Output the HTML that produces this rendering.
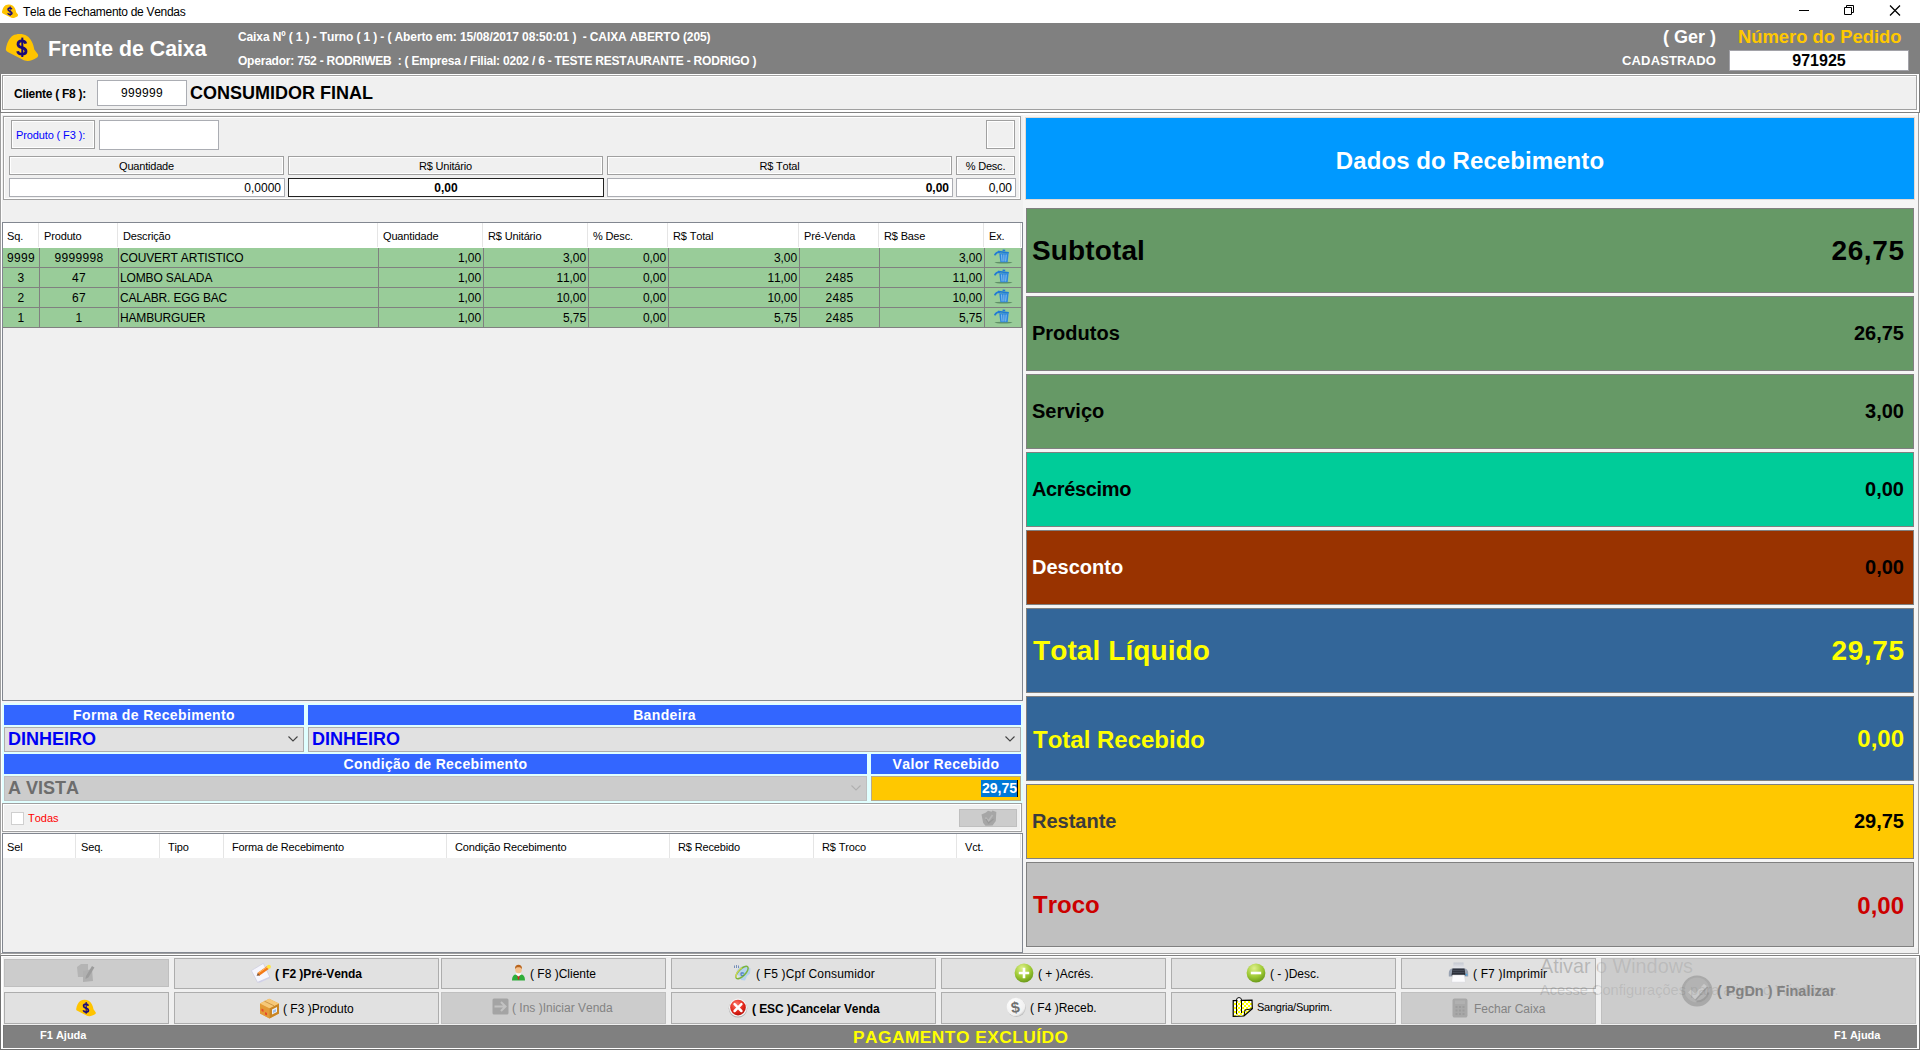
<!DOCTYPE html>
<html lang="pt-BR">
<head>
<meta charset="utf-8">
<title>Tela de Fechamento de Vendas</title>
<style>
*{box-sizing:border-box;margin:0;padding:0}
html,body{width:1920px;height:1050px;overflow:hidden;background:#f0f0f0}
body{position:relative;font-family:"Liberation Sans",sans-serif;font-size:12px;color:#000;font-kerning:none}
.a{position:absolute}
.t{position:absolute;white-space:nowrap;line-height:1}
.b{font-weight:bold}
.w{color:#fff}
/* sunken frame: gray line with white inner line */
.fr{position:absolute;border:1px solid #a0a0a0;box-shadow:inset 1px 1px 0 #fff, inset -1px -1px 0 #fff;background:#f0f0f0}
.lbl{position:absolute;border:1px solid #a0a0a0;box-shadow:inset 1px 1px 0 #fff,inset -1px -1px 0 #fff;background:#f0f0f0;font-size:11px;text-align:center;line-height:19px;letter-spacing:-0.2px}
.inp{position:absolute;border:1px solid #abadb3;background:#fff;font-size:12px;text-align:right;line-height:18px;padding-right:3px;overflow:hidden}
.gh{position:absolute;top:0;height:24px;font-size:11px;line-height:27px;border-right:1px solid #e5e5e5;padding-left:4px;background:#fff;letter-spacing:-0.15px}
.row{position:absolute;left:0;width:1018px;height:20px;background:#99cc99;border-bottom:1px solid #808080}
.c{position:absolute;top:0;height:19px;border-right:1px solid #808080;font-size:12px;line-height:21px;white-space:nowrap;letter-spacing:-0.1px}
.r{text-align:right;padding-right:2px}
.m{text-align:center;letter-spacing:0.3px}
.bh{position:absolute;background:#3366ff;color:#fff;font-weight:bold;font-size:14px;text-align:center;height:20px;line-height:20px;letter-spacing:0.35px}
.cb{position:absolute;height:25px;border:1px solid #adadad;background:#e1e1e1;font-weight:bold;font-size:18px;line-height:22px;padding-left:3px;color:#0000f5}
.box{position:absolute;left:1026px;width:888px;border:1px solid #808080;font-weight:bold}
.box .l{position:absolute;left:5px;white-space:nowrap;line-height:1}
.box .v{position:absolute;right:9px;white-space:nowrap;line-height:1}
.btn{position:absolute;border:1px solid #adadad;background:#e1e1e1;font-size:12px}
.btn.d{background:#cccccc;border-color:#bfbfbf;color:#838383}
.btn .x{position:absolute;white-space:nowrap;line-height:1}
.btn svg{position:absolute}
</style>
</head>
<body>

<!-- ===== window title bar ===== -->
<div class="a" id="titlebar" style="left:0;top:0;width:1920px;height:23px;background:#fff">
<svg class="a" style="left:1px;top:3px" width="18" height="16" viewBox="0 0 36 32"><path d="M1.9 17.9C2.8 13 5 7 9 4.6C13 2.4 19 2.6 23 5C27 7.5 29.5 13 30.3 18.6L33.9 23.2C34.6 24.6 33.8 26 32.6 26.8C30 28.6 26 30.2 23.4 30C21.5 29.8 20 29.200 18.9 28.7L3.8 20.9C2.2 20 1.7 19 1.9 17.9Z" fill="#ffc400"/><path d="M21.800 12.600C21.200 10.600 19.700 9.900 17.900 9.900C15.500 9.900 14 11.200 14 13.200C14 15.300 16 16.100 18 16.700C20.300 17.400 22 18.200 22 20.200C22 22.200 20.300 23.200 17.900 23.200C15.600 23.200 14.100 22.300 13.600 20.200" fill="none" stroke="#1a0a7a" stroke-width="2.800"/><path d="M18.300 6.600V26" stroke="#1a0a7a" stroke-width="2"/></svg>
<div class="t" id="ttl" style="left:23px;top:6px;font-size:12px;letter-spacing:-0.300px">Tela de Fechamento de Vendas</div>
<svg class="a" style="left:1790px;top:0" width="130" height="23" viewBox="0 0 130 23" fill="none" stroke="#000" stroke-width="1"><path d="M9 10.5H19"/><path d="M54.5 7.5h7v7h-7z"/><path d="M56.5 7.5v-2h7v7h-2"/><path d="M100 5.500l10 10M110 5.500l-10 10" stroke-width="1.25"/></svg>
</div>

<!-- ===== gray header ===== -->
<div class="a" id="hdr" style="left:0;top:23px;width:1920px;height:51px;background:#808080">
<svg class="a" style="left:4px;top:8px" width="36" height="32" viewBox="0 0 36 32"><path d="M1.9 17.9C2.8 13 5 7 9 4.6C13 2.4 19 2.6 23 5C27 7.5 29.5 13 30.3 18.6L33.9 23.2C34.6 24.6 33.8 26 32.6 26.8C30 28.6 26 30.2 23.4 30C21.5 29.8 20 29.200 18.9 28.7L3.8 20.9C2.2 20 1.7 19 1.9 17.9Z" fill="#ffc400"/><path d="M21.800 12.600C21.200 10.600 19.700 9.900 17.900 9.900C15.500 9.900 14 11.200 14 13.200C14 15.300 16 16.100 18 16.700C20.300 17.400 22 18.200 22 20.200C22 22.200 20.300 23.200 17.900 23.200C15.600 23.200 14.100 22.300 13.600 20.200" fill="none" stroke="#1a0a7a" stroke-width="2.800"/><path d="M18.300 6.600V26" stroke="#1a0a7a" stroke-width="2"/></svg>
<div class="t b w" id="fdc" style="left:48px;top:16px;font-size:21.3px">Frente de Caixa</div>
<div class="t b w" id="h1" style="left:238px;top:8px;font-size:12px;letter-spacing:-0.116px">Caixa Nº ( 1 ) - Turno ( 1 ) - ( Aberto em: 15/08/2017 08:50:01 )&nbsp; - CAIXA ABERTO (205)</div>
<div class="t b w" id="h2" style="left:238px;top:32px;font-size:12px;letter-spacing:-0.217px">Operador: 752 - RODRIWEB&nbsp; : ( Empresa / Filial: 0202 / 6 - TESTE RESTAURANTE - RODRIGO )</div>
<div class="t b w" id="ger" style="right:204px;top:5px;font-size:18px">( Ger )</div>
<div class="t b" id="nped" style="left:1738px;top:5px;font-size:18.4px;color:#ffc800">Número do Pedido</div>
<div class="t b w" id="cad" style="right:204px;top:31px;font-size:13px;letter-spacing:0.15px">CADASTRADO</div>
<div class="a b" id="pedbox" style="left:1729px;top:27px;width:180px;height:21px;background:#fff;border:1px solid #a2a2a8;text-align:center;font-size:16px;line-height:19px">971925</div>
</div>

<!-- ===== client panel ===== -->
<div class="a" id="cli" style="left:0;top:74px;width:1920px;height:39px">
<div class="a" style="left:0;top:0;width:1920px;height:38px;background:#fff"></div>
<div class="a" style="left:0;top:0;width:1px;height:39px;background:#7a7a7a"></div>
<div class="a" style="left:1919px;top:0;width:1px;height:39px;background:#7a7a7a"></div>
<div class="a" style="left:2px;top:1px;width:1915px;height:35px;border:1px solid #a0a0a0;background:#f0f0f0;box-shadow:inset 1px 1px 0 #fff"></div>
<div class="a" style="left:0;top:38px;width:1920px;height:1px;background:#808080"></div>
<div class="t b" id="clbl" style="left:14px;top:14px;font-size:12px;letter-spacing:-0.27px">Cliente ( F8 ):</div>
<div class="a" id="cinp" style="left:97px;top:6px;width:90px;height:26px;background:#fff;border:1px solid #abadb3;text-align:center;font-size:12px;line-height:24px;letter-spacing:0.33px">999999</div>
<div class="t b" id="cname" style="left:190px;top:10px;font-size:18px">CONSUMIDOR FINAL</div>
</div>

<!-- ===== main area ===== -->
<div class="a" id="main" style="left:0;top:113px;width:1920px;height:842px">
<div class="a" style="left:0;top:0;width:1px;height:842px;background:#a0a0a0"></div>
<div class="a" style="left:1px;top:0;width:1918px;height:2px;background:#fff"></div>
<div class="a" style="left:1px;top:0;width:1px;height:842px;background:#fff"></div>
<div class="a" style="left:1918px;top:0;width:1px;height:841px;background:#a0a0a0"></div>
<div class="a" style="left:1919px;top:0;width:1px;height:842px;background:#fff"></div>
<div class="a" style="left:1px;top:840px;width:1918px;height:1px;background:#a0a0a0"></div>
<div class="a" style="left:1px;top:841px;width:1919px;height:1px;background:#fff"></div>

<!-- product entry panel -->
<div class="fr" id="prod" style="left:3px;top:3px;width:1018px;height:84px">
<div class="lbl" id="plbl" style="left:7px;top:3px;width:84px;height:29px;font-size:11px;line-height:28px;color:#0000ff;letter-spacing:-0.12px;text-align:left;padding-left:4px">Produto ( F3 ):</div>
<div class="inp" style="left:95px;top:3px;width:120px;height:30px"></div>
<div class="lbl" style="left:982px;top:3px;width:29px;height:29px"></div>
<div class="lbl" style="left:5px;top:39px;width:275px;height:19px"><span id="lq">Quantidade</span></div>
<div class="lbl" style="left:284px;top:39px;width:315px;height:19px"><span id="lu">R$ Unitário</span></div>
<div class="lbl" style="left:603px;top:39px;width:345px;height:19px"><span id="lt">R$ Total</span></div>
<div class="lbl" style="left:952px;top:39px;width:59px;height:19px"><span id="ld">% Desc.</span></div>
<div class="inp" style="left:5px;top:61px;width:276px;height:19px"><span id="iq">0,0000</span></div>
<div class="inp b" style="left:284px;top:61px;width:316px;height:19px;border-color:#222;text-align:center;padding-right:0;font-family:'Liberation Sans',sans-serif"><span id="iu">0,00</span></div>
<div class="inp b" style="left:603px;top:61px;width:346px;height:19px"><span id="it">0,00</span></div>
<div class="inp" style="left:952px;top:61px;width:60px;height:19px"><span id="id">0,00</span></div>
</div>

<!-- items grid -->
<div class="a" id="g1" style="left:2px;top:109px;width:1021px;height:479px;border:1px solid #828790;background:#f0f0f0">
<div class="a" style="left:0;top:0;width:1019px;height:25px;background:#fff"><div class="gh" style="left:0px;width:36px"><span id="gh0">Sq.</span></div><div class="gh" style="left:37px;width:78px"><span id="gh1">Produto</span></div><div class="gh" style="left:116px;width:259px"><span id="gh2">Descrição</span></div><div class="gh" style="left:376px;width:104px"><span id="gh3">Quantidade</span></div><div class="gh" style="left:481px;width:104px"><span id="gh4">R$ Unitário</span></div><div class="gh" style="left:586px;width:79px"><span id="gh5">% Desc.</span></div><div class="gh" style="left:666px;width:130px"><span id="gh6">R$ Total</span></div><div class="gh" style="left:797px;width:79px"><span id="gh7">Pré-Venda</span></div><div class="gh" style="left:877px;width:104px"><span id="gh8">R$ Base</span></div><div class="gh" style="left:982px;width:36px"><span id="gh9">Ex.</span></div></div>
<div class="row" style="top:25px;width:1019px"><div class="c m" style="left:0px;width:37px;"><span id="r0c0">9999</span></div><div class="c m" style="left:37px;width:79px;"><span id="r0c1">9999998</span></div><div class="c" style="left:116px;width:260px;padding-left:1px;letter-spacing:-0.150px"><span id="r0c2">COUVERT ARTISTICO</span></div><div class="c r" style="left:376px;width:105px;"><span id="r0c3">1,00</span></div><div class="c r" style="left:481px;width:105px;"><span id="r0c4">3,00</span></div><div class="c r" style="left:586px;width:80px;"><span id="r0c5">0,00</span></div><div class="c r" style="left:666px;width:131px;"><span id="r0c6">3,00</span></div><div class="c m" style="left:797px;width:80px;"><span id="r0c7"></span></div><div class="c r" style="left:877px;width:105px;"><span id="r0c8">3,00</span></div><div class="c" style="left:982px;width:37px"><svg style="position:absolute;left:9px;top:0px" width="20" height="16" viewBox="0 0 20 16"><ellipse cx="9.5" cy="14.6" rx="9" ry="0.9" fill="#5f8f66"/><path d="M5.2 5.2h9.4l-1 9H6.4z" fill="#2a86dc"/><path d="M7.6 6.5l.5 7M9.9 6.5v7M12.2 6.5l-.5 7" stroke="#8cc0ee" stroke-width="1"/><path d="M4.6 3.6l10.2 1.2" stroke="#1f7ad6" stroke-width="1.6"/><path d="M8.6 2.2l2.6.4" stroke="#1f7ad6" stroke-width="1.5"/><path d="M0.6 7.4C1.8 5 3.6 3.8 6 3.9" stroke="#1f7ad6" stroke-width="1.6" fill="none"/><path d="M4.2 2.6l2.6 1.4-2.2 1.4z" fill="#1f7ad6"/></svg></div></div>
<div class="row" style="top:45px;width:1019px"><div class="c m" style="left:0px;width:37px;"><span id="r1c0">3</span></div><div class="c m" style="left:37px;width:79px;"><span id="r1c1">47</span></div><div class="c" style="left:116px;width:260px;padding-left:1px;letter-spacing:-0.150px"><span id="r1c2">LOMBO SALADA</span></div><div class="c r" style="left:376px;width:105px;"><span id="r1c3">1,00</span></div><div class="c r" style="left:481px;width:105px;"><span id="r1c4">11,00</span></div><div class="c r" style="left:586px;width:80px;"><span id="r1c5">0,00</span></div><div class="c r" style="left:666px;width:131px;"><span id="r1c6">11,00</span></div><div class="c m" style="left:797px;width:80px;"><span id="r1c7">2485</span></div><div class="c r" style="left:877px;width:105px;"><span id="r1c8">11,00</span></div><div class="c" style="left:982px;width:37px"><svg style="position:absolute;left:9px;top:0px" width="20" height="16" viewBox="0 0 20 16"><ellipse cx="9.5" cy="14.6" rx="9" ry="0.9" fill="#5f8f66"/><path d="M5.2 5.2h9.4l-1 9H6.4z" fill="#2a86dc"/><path d="M7.6 6.5l.5 7M9.9 6.5v7M12.2 6.5l-.5 7" stroke="#8cc0ee" stroke-width="1"/><path d="M4.6 3.6l10.2 1.2" stroke="#1f7ad6" stroke-width="1.6"/><path d="M8.6 2.2l2.6.4" stroke="#1f7ad6" stroke-width="1.5"/><path d="M0.6 7.4C1.8 5 3.6 3.8 6 3.9" stroke="#1f7ad6" stroke-width="1.6" fill="none"/><path d="M4.2 2.6l2.6 1.4-2.2 1.4z" fill="#1f7ad6"/></svg></div></div>
<div class="row" style="top:65px;width:1019px"><div class="c m" style="left:0px;width:37px;"><span id="r2c0">2</span></div><div class="c m" style="left:37px;width:79px;"><span id="r2c1">67</span></div><div class="c" style="left:116px;width:260px;padding-left:1px;letter-spacing:-0.150px"><span id="r2c2">CALABR. EGG BAC</span></div><div class="c r" style="left:376px;width:105px;"><span id="r2c3">1,00</span></div><div class="c r" style="left:481px;width:105px;"><span id="r2c4">10,00</span></div><div class="c r" style="left:586px;width:80px;"><span id="r2c5">0,00</span></div><div class="c r" style="left:666px;width:131px;"><span id="r2c6">10,00</span></div><div class="c m" style="left:797px;width:80px;"><span id="r2c7">2485</span></div><div class="c r" style="left:877px;width:105px;"><span id="r2c8">10,00</span></div><div class="c" style="left:982px;width:37px"><svg style="position:absolute;left:9px;top:0px" width="20" height="16" viewBox="0 0 20 16"><ellipse cx="9.5" cy="14.6" rx="9" ry="0.9" fill="#5f8f66"/><path d="M5.2 5.2h9.4l-1 9H6.4z" fill="#2a86dc"/><path d="M7.6 6.5l.5 7M9.9 6.5v7M12.2 6.5l-.5 7" stroke="#8cc0ee" stroke-width="1"/><path d="M4.6 3.6l10.2 1.2" stroke="#1f7ad6" stroke-width="1.6"/><path d="M8.6 2.2l2.6.4" stroke="#1f7ad6" stroke-width="1.5"/><path d="M0.6 7.4C1.8 5 3.6 3.8 6 3.9" stroke="#1f7ad6" stroke-width="1.6" fill="none"/><path d="M4.2 2.6l2.6 1.4-2.2 1.4z" fill="#1f7ad6"/></svg></div></div>
<div class="row" style="top:85px;width:1019px"><div class="c m" style="left:0px;width:37px;"><span id="r3c0">1</span></div><div class="c m" style="left:37px;width:79px;"><span id="r3c1">1</span></div><div class="c" style="left:116px;width:260px;padding-left:1px;letter-spacing:-0.150px"><span id="r3c2">HAMBURGUER</span></div><div class="c r" style="left:376px;width:105px;"><span id="r3c3">1,00</span></div><div class="c r" style="left:481px;width:105px;"><span id="r3c4">5,75</span></div><div class="c r" style="left:586px;width:80px;"><span id="r3c5">0,00</span></div><div class="c r" style="left:666px;width:131px;"><span id="r3c6">5,75</span></div><div class="c m" style="left:797px;width:80px;"><span id="r3c7">2485</span></div><div class="c r" style="left:877px;width:105px;"><span id="r3c8">5,75</span></div><div class="c" style="left:982px;width:37px"><svg style="position:absolute;left:9px;top:0px" width="20" height="16" viewBox="0 0 20 16"><ellipse cx="9.5" cy="14.6" rx="9" ry="0.9" fill="#5f8f66"/><path d="M5.2 5.2h9.4l-1 9H6.4z" fill="#2a86dc"/><path d="M7.6 6.5l.5 7M9.9 6.5v7M12.2 6.5l-.5 7" stroke="#8cc0ee" stroke-width="1"/><path d="M4.6 3.6l10.2 1.2" stroke="#1f7ad6" stroke-width="1.6"/><path d="M8.6 2.2l2.6.4" stroke="#1f7ad6" stroke-width="1.5"/><path d="M0.6 7.4C1.8 5 3.6 3.8 6 3.9" stroke="#1f7ad6" stroke-width="1.6" fill="none"/><path d="M4.2 2.6l2.6 1.4-2.2 1.4z" fill="#1f7ad6"/></svg></div></div>
</div>

<!-- payment area -->
<div class="a" id="pay" style="left:2px;top:588px;width:1021px;height:102px;background:#e0ffff">
<div class="a" style="left:0;top:0;width:1021px;height:2px;background:#f5f5f5"></div>
<div class="bh" style="left:2px;top:4px;width:300px"><span id="bh1">Forma de Recebimento</span></div>
<div class="bh" style="left:306px;top:4px;width:713px"><span id="bh2">Bandeira</span></div>
<div class="cb" style="left:2px;top:26px;width:300px"><span id="cb1">DINHEIRO</span><svg style="position:absolute;right:5px;top:8px" width="10" height="6" viewBox="0 0 10 6"><path d="M0.5 0.5l4.5 4.5 4.5-4.5" fill="none" stroke="#444" stroke-width="1.1"/></svg></div>
<div class="cb" style="left:306px;top:26px;width:713px"><span id="cb2">DINHEIRO</span><svg style="position:absolute;right:5px;top:8px" width="10" height="6" viewBox="0 0 10 6"><path d="M0.5 0.5l4.5 4.5 4.5-4.5" fill="none" stroke="#444" stroke-width="1.1"/></svg></div>
<div class="bh" style="left:2px;top:53px;width:863px"><span id="bh3">Condição de Recebimento</span></div>
<div class="bh" style="left:869px;top:53px;width:150px"><span id="bh4">Valor Recebido</span></div>
<div class="cb" style="left:2px;top:75px;width:863px;background:#cccccc;border-color:#bfbfbf;color:#6d6d6d"><span id="cb3">A VISTA</span><svg style="position:absolute;right:5px;top:8px" width="10" height="6" viewBox="0 0 10 6"><path d="M0.5 0.5l4.5 4.5 4.5-4.5" fill="none" stroke="#b0b0b0" stroke-width="1.1"/></svg></div>
<div class="a" style="left:869px;top:75px;width:150px;height:25px;background:#ffc800;border:1px solid #b9a98a"><span class="a b w" id="sel" style="right:2px;top:3px;height:17px;background:#0078d7;font-size:14px;line-height:17px;padding:0 0 0 1px;border-right:1px solid #000">29,75</span></div>
</div>

<!-- todas panel -->
<div class="fr" id="todas" style="left:2px;top:690px;width:1020px;height:29px">
<div class="a" style="left:8px;top:8px;width:13px;height:13px;background:#fff;border:1px solid #cfcfcf"></div>
<div class="t" id="tod" style="left:25px;top:9px;font-size:11px;color:#ff0000">Todas</div>
<div class="a" style="left:956px;top:5px;width:58px;height:18px;background:#cccccc;border:1px solid #bfbfbf"><svg class="a" style="left:20px;top:0" width="18" height="17" viewBox="0 0 18 17"><path d="M1.500 4.500L6 2.500l2-1.800 3.500 1 1-1.200 3.800 1.500-.5 9-3.300 4.500-7 .3-2.300-2.800z" fill="#a6a6a6"/><path d="M5.500 7.500l3 3.500 4-6" fill="none" stroke="#b8b8b8" stroke-width="1.600"/><path d="M6 9l2.500 4 5-4" fill="none" stroke="#999" stroke-width="1.200"/></svg></div>
</div>

<!-- payments grid -->
<div class="a" id="g2" style="left:2px;top:720px;width:1021px;height:120px;border:1px solid #828790;background:#f0f0f0">
<div class="a" style="left:0;top:0;width:1019px;height:24px;background:#fff"><div class="gh" style="left:0px;width:73px;padding-left:4px"><span id="hh0">Sel</span></div><div class="gh" style="left:73px;width:84px;padding-left:5px"><span id="hh1">Seq.</span></div><div class="gh" style="left:157px;width:64px;padding-left:8px"><span id="hh2">Tipo</span></div><div class="gh" style="left:221px;width:223px;padding-left:8px"><span id="hh3">Forma de Recebimento</span></div><div class="gh" style="left:444px;width:223px;padding-left:8px"><span id="hh4">Condição Recebimento</span></div><div class="gh" style="left:667px;width:144px;padding-left:8px"><span id="hh5">R$ Recebido</span></div><div class="gh" style="left:811px;width:143px;padding-left:8px"><span id="hh6">R$ Troco</span></div><div class="gh" style="left:954px;width:64px;padding-left:8px"><span id="hh7">Vct.</span></div></div>
</div>

<!-- right panel -->
<div class="a" id="right" style="left:1023px;top:2px;width:895px;height:838px;background:#f5f5f5">
<div class="a b w" id="dados" style="left:2px;top:2px;width:890px;height:83px;background:#0099ff;border:1px solid #e4dad2;text-align:center;font-size:24px;line-height:85px;letter-spacing:0.080px">Dados do Recebimento</div>
<div class="box" style="left:3px;top:93px;height:85px;background:#669966"><span class="l" id="bl0" style="top:28px;font-size:28px;color:#000;letter-spacing:0.13px">Subtotal</span><span class="v" id="bv0" style="margin-right:-0.600px;top:28px;font-size:28px;color:#000;letter-spacing:0.6px">26,75</span></div>
<div class="box" style="left:3px;top:181px;height:75px;background:#669966"><span class="l" id="bl1" style="top:26px;font-size:20px;color:#000">Produtos</span><span class="v" id="bv1" style="top:26px;font-size:20px;color:#000">26,75</span></div>
<div class="box" style="left:3px;top:259px;height:75px;background:#669966"><span class="l" id="bl2" style="top:26px;font-size:20px;color:#000">Serviço</span><span class="v" id="bv2" style="top:26px;font-size:20px;color:#000">3,00</span></div>
<div class="box" style="left:3px;top:337px;height:75px;background:#00cc99"><span class="l" id="bl3" style="top:26px;font-size:20px;color:#000;letter-spacing:-0.35px">Acréscimo</span><span class="v" id="bv3" style="top:26px;font-size:20px;color:#000">0,00</span></div>
<div class="box" style="left:3px;top:415px;height:75px;background:#993300"><span class="l" id="bl4" style="top:26px;font-size:20px;color:#fff">Desconto</span><span class="v" id="bv4" style="top:26px;font-size:20px;color:#000">0,00</span></div>
<div class="box" style="left:3px;top:493px;height:85px;background:#336699"><span class="l" id="bl5" style="top:28px;font-size:28px;color:#ffff00;left:6px;letter-spacing:0.09px">Total Líquido</span><span class="v" id="bv5" style="margin-right:-0.600px;top:28px;font-size:28px;color:#ffff00;letter-spacing:0.6px">29,75</span></div>
<div class="box" style="left:3px;top:581px;height:85px;background:#336699"><span class="l" id="bl6" style="top:31px;font-size:24px;color:#ffff00;left:6px">Total Recebido</span><span class="v" id="bv6" style="top:30px;font-size:24px;color:#ffff00">0,00</span></div>
<div class="box" style="left:3px;top:669px;height:75px;background:#ffc800"><span class="l" id="bl7" style="top:26px;font-size:20px;color:#3c3c3c">Restante</span><span class="v" id="bv7" style="top:26px;font-size:20px;color:#000">29,75</span></div>
<div class="box" style="left:3px;top:747px;height:85px;background:#c0c0c0"><span class="l" id="bl8" style="top:30px;font-size:24px;color:#cc0000;left:6px">Troco</span><span class="v" id="bv8" style="top:31px;font-size:24px;color:#cc0000">0,00</span></div>
<div class="a" style="left:0;top:833px;width:895px;height:5px;background:#f0f0f0"></div>
</div>
</div>

<!-- ===== button bar ===== -->
<div class="a" id="bar" style="left:0;top:955px;width:1920px;height:95px">
<div class="a" style="left:0;top:0;width:1920px;height:1px;background:#808080"></div><div class="a" style="left:0;top:1px;width:1px;height:94px;background:#707070"></div><div class="a" style="left:1919px;top:1px;width:1px;height:94px;background:#707070"></div><div class="a" style="left:1px;top:1px;width:1918px;height:1px;background:#fff"></div><div class="a" style="left:1px;top:2px;width:2px;height:92px;background:#fff"></div><div class="a" style="left:1917px;top:2px;width:2px;height:92px;background:#fafafa"></div><div class="a" style="left:1px;top:93px;width:1918px;height:1px;background:#fff"></div><div class="a" style="left:0;top:94px;width:1920px;height:1px;background:#707070"></div>
<div class="btn d" style="left:4px;top:4px;width:165px;height:28px"><svg style="left:71px;top:3px" width="20" height="20" viewBox="0 0 20 20"><path d="M1 4l4-3h7v13H2z" fill="#b4b4b4"/><path d="M7 8l9-2 1 12-10 1z" fill="#b0b0b0"/><path d="M10 13l6-10 2.4 1.4-6 10-3 1.6z" fill="#9c9c9c"/></svg></div>
<div class="btn" style="left:4px;top:37px;width:165px;height:32px"><svg style="left:70px;top:5px" width="22" height="19.500" viewBox="0 0 36 32"><path d="M1.9 17.9C2.8 13 5 7 9 4.6C13 2.4 19 2.6 23 5C27 7.5 29.5 13 30.3 18.6L33.9 23.2C34.6 24.6 33.8 26 32.6 26.8C30 28.6 26 30.2 23.4 30C21.5 29.8 20 29.200 18.9 28.7L3.8 20.9C2.2 20 1.7 19 1.9 17.9Z" fill="#ffc400"/><path d="M21.800 12.600C21.200 10.600 19.700 9.900 17.900 9.900C15.500 9.900 14 11.200 14 13.200C14 15.300 16 16.100 18 16.700C20.300 17.400 22 18.200 22 20.200C22 22.200 20.300 23.200 17.900 23.200C15.600 23.200 14.100 22.300 13.600 20.200" fill="none" stroke="#1a0a7a" stroke-width="2.800"/><path d="M18.300 6.600V26" stroke="#1a0a7a" stroke-width="2"/></svg></div>
<div class="btn" style="left:174px;top:3px;width:265px;height:31px"><svg style="left:76px;top:3px" width="21" height="21" viewBox="0 0 21 21"><path d="M2 10L13 3l6.500 13L8 21z" fill="#d2d2e8"/><path d="M0.400 8.600L12.300 1.400l6.500 13.600L6.500 20.300z" fill="#f6f6fd" stroke="#c6c6de" stroke-width=".6"/><path d="M7.300 12.300L16.800 5.600" stroke="#f47a18" stroke-width="3.400"/><path d="M7 11.300L16.300 4.800" stroke="#ffb868" stroke-width="1"/><path d="M5.600 13.700l1.300-2.800 2 2.500z" fill="#7a5030"/><circle cx="17.900" cy="4.800" r="2" fill="#ffe640"/></svg><span class="x b" id="t_b1" style="left:100px;top:9px;font-size:12px;letter-spacing:-0.07px">( F2 )Pré-Venda</span></div>
<div class="btn" style="left:174px;top:37px;width:265px;height:32px"><svg style="left:84px;top:5px" width="21" height="21" viewBox="0 0 21 21"><path d="M10.200.8L20 5.500v10L10.500 20.500 1 15.500v-10z" fill="#e9a94a"/><path d="M1 5.500l9.500 4.700V20.500L1 15.500z" fill="#e39a36"/><path d="M10.500 10.200L20 5.500v10L10.500 20.500z" fill="#c98524"/><path d="M10.200.8L20 5.500l-9.500 4.700L1 5.500z" fill="#f6c878"/><path d="M5.500 3.200l9.500 4.600" stroke="#c08a3c" stroke-width=".8"/><path d="M13 11.500l5-2.500v5l-5 2.500z" fill="#e8f0fb"/><path d="M14 12.500l3-1.500v2.500l-3 1.500z" fill="#9cbcea"/><path d="M2.500 10.500l2 1v2.500l-2-1zM6 14l2 1v2.500l-2-1z" fill="#e8482c"/></svg><span class="x" id="t_b2" style="left:108px;top:10px;font-size:12px">( F3 )Produto</span></div>
<div class="btn" style="left:441px;top:3px;width:225px;height:31px"><svg style="left:69px;top:5px" width="15" height="17" viewBox="0 0 15 17"><path d="M1 16.500c0-4.500 2-6.500 6.500-6.500s6.500 2 6.500 6.500z" fill="#2fae3a"/><path d="M6.300 10.500h2.400l-.5 4.500-.7 1-.7-1z" fill="#d82020"/><path d="M4.500 10.300l3 2.200 3-2.200-.8-1H5.300z" fill="#fff"/><ellipse cx="7.500" cy="5.500" rx="3.300" ry="3.800" fill="#f4c08c"/><path d="M4 5C3.800 2 5.500.8 7.500.8S11.200 2 11 5C10 3.500 8.800 3.200 7.500 3.200S5 3.500 4 5z" fill="#b8641c"/></svg><span class="x" id="t_c1" style="left:88px;top:9px;font-size:12px">( F8 )Cliente</span></div>
<div class="btn d" style="left:441px;top:37px;width:225px;height:32px"><svg style="left:50px;top:5px" width="17" height="17" viewBox="0 0 17 17"><rect x=".5" y=".5" width="16" height="16" rx="1.500" fill="#a4a4a4"/><path d="M2.500 8.500h11M9 4l4.500 4.500L9 13" fill="none" stroke="#c2c2c2" stroke-width="2"/></svg><span class="x" id="t_c2" style="left:70px;top:9px;font-size:12px">( Ins )Iniciar Venda</span></div>
<div class="btn" style="left:671px;top:3px;width:265px;height:31px"><svg style="left:61px;top:5px" width="18" height="17" viewBox="0 0 18 17"><path d="M7 3l6-1.500 4.500 3-.5 5-3 2.500-2 4.500-4-.5L6.500 12 3 10.500 4 6z" fill="#b4d2ee"/><path d="M1.500 1.500v2.500M3.500 1v3M5.500 1.500v2.500" stroke="#6a86b4" stroke-width=".9"/><ellipse cx="9" cy="8.500" rx="8" ry="3.400" transform="rotate(-45 9 8.500)" fill="none" stroke="#7cb440" stroke-width="1.500"/><path d="M3.400 13.600C2 11 5 6 9 3.500" fill="none" stroke="#d4d858" stroke-width="1.200"/><text x="9" y="11.500" font-family="Liberation Sans" font-weight="bold" font-size="7.500" text-anchor="middle" fill="#4c7cc0">e</text></svg><span class="x" id="t_d1" style="left:84px;top:9px;font-size:12px;letter-spacing:0.18px">( F5 )Cpf Consumidor</span></div>
<div class="btn" style="left:671px;top:37px;width:265px;height:32px"><svg style="left:56px;top:5px" width="20" height="20" viewBox="0 0 20 20"><defs><radialGradient id="gR" cx=".4" cy=".3" r=".8"><stop offset="0" stop-color="#ff7a6a"/><stop offset=".6" stop-color="#e02418"/><stop offset="1" stop-color="#a80c08"/></radialGradient></defs><circle cx="10" cy="10.300" r="9.300" fill="#8c8c8c" opacity=".55"/><circle cx="10" cy="9.600" r="9" fill="#f4f4f4"/><circle cx="10" cy="9.600" r="7.800" fill="url(#gR)"/><path d="M6.600 6.200l6.800 6.800M13.400 6.200l-6.800 6.800" stroke="#fff" stroke-width="2.500" stroke-linecap="round"/></svg><span class="x b" id="t_d2" style="left:80px;top:10px;font-size:12px;letter-spacing:-0.09px">( ESC )Cancelar Venda</span></div>
<div class="btn" style="left:941px;top:3px;width:225px;height:31px"><svg style="left:72px;top:4px" width="20" height="20" viewBox="0 0 20 20"><defs><radialGradient id="gG" cx=".4" cy=".25" r=".85"><stop offset="0" stop-color="#dff08c"/><stop offset=".55" stop-color="#9cc832"/><stop offset="1" stop-color="#5c8c14"/></radialGradient></defs><circle cx="10" cy="10" r="9.400" fill="url(#gG)"/><path d="M10 4.800v10.400M4.800 10h10.400" stroke="#fff" stroke-width="2.600"/></svg><span class="x" id="t_e1" style="left:96px;top:9px;font-size:12px">( + )Acrés.</span></div>
<div class="btn" style="left:941px;top:37px;width:225px;height:32px"><svg style="left:64px;top:4px" width="20" height="20" viewBox="0 0 20 20"><defs><radialGradient id="gS" cx=".35" cy=".3" r=".85"><stop offset="0" stop-color="#ffffff"/><stop offset=".75" stop-color="#f0f0f0"/><stop offset="1" stop-color="#b4b4b4"/></radialGradient></defs><circle cx="10.400" cy="10.600" r="9.300" fill="#a0a0a0" opacity=".5"/><circle cx="10" cy="10" r="9.300" fill="url(#gS)"/><text transform="translate(10 15.600) rotate(-8)" font-family="Liberation Sans" font-weight="bold" font-size="15.500" text-anchor="middle" fill="#707070">$</text></svg><span class="x" id="t_e2" style="left:88px;top:9px;font-size:12px;letter-spacing:0px">( F4 )Receb.</span></div>
<div class="btn" style="left:1171px;top:3px;width:225px;height:31px"><svg style="left:74px;top:4px" width="20" height="20" viewBox="0 0 20 20"><circle cx="10" cy="10" r="9.400" fill="url(#gG)"/><path d="M4.800 10h10.400" stroke="#fff" stroke-width="2.600"/></svg><span class="x" id="t_f1" style="left:98px;top:9px;font-size:12px">( - )Desc.</span></div>
<div class="btn" style="left:1171px;top:37px;width:225px;height:32px"><svg style="left:60px;top:4px" width="21" height="21" viewBox="0 0 21 21"><defs><pattern id="chk" width="4" height="4" patternUnits="userSpaceOnUse"><rect width="4" height="4" fill="#fff"/><rect width="2" height="2" fill="#ffff00"/><rect x="2" y="2" width="2" height="2" fill="#ffff00"/></pattern></defs><path d="M1.200 3.600L20 3.200l.3 8.500L12 19l-10.800.3z" fill="url(#chk)" stroke="#000" stroke-width="1.200"/><path d="M12 19l1-6 7.300-1.300" fill="none" stroke="#000" stroke-width="1"/><path d="M4.500 17V2.800C4.500 1.500 5.500.700 7 .700S9.500 1.500 9.500 2.800V16" fill="none" stroke="#000" stroke-width="1"/><path d="M5.500 4V2.800C5.500 2 6.200 1.600 7 1.600S8.500 2 8.500 2.800V4" fill="#fff" stroke="none"/></svg><span class="x" id="t_f2" style="left:85px;top:9px;font-size:11px;letter-spacing:-0.26px">Sangria/Suprim.</span></div>
<div class="btn" style="left:1401px;top:3px;width:195px;height:31px"><svg style="left:46px;top:3px" width="21" height="21" viewBox="0 0 21 21"><defs><linearGradient id="gP" x1="0" y1="0" x2="0" y2="1"><stop offset="0" stop-color="#c4c8d0"/><stop offset="1" stop-color="#f0f0f4"/></linearGradient></defs><path d="M5.500.500h10l.8 7.500H4.700z" fill="url(#gP)"/><path d="M.800 11c0-2.500 1.500-4.500 4-4.500h11.400c2.500 0 4 2 4 4.500v3.500H.800z" fill="#98a2b2"/><path d="M4.500 6.500h12l1 7h-14z" fill="#2a2e38"/><path d="M4.800 8.300h11.400M4.500 10.300h12" stroke="#5a6070" stroke-width=".7"/><path d="M4.600 13h11.800l1.100 7.200H3.500z" fill="#fbfbfd" stroke="#d0d0d4" stroke-width=".5"/><circle cx="18.500" cy="12.700" r=".9" fill="#48a8e8"/></svg><span class="x" id="t_g1" style="left:71px;top:9px;font-size:12px;letter-spacing:0.15px">( F7 )Imprimir</span></div>
<div class="btn d" style="left:1401px;top:37px;width:195px;height:32px"><svg style="left:50px;top:5px" width="16" height="20" viewBox="0 0 16 20"><rect x=".5" y=".5" width="15" height="19" rx="2" fill="#a8a8a8"/><path d="M3.500 8h2v2h-2zM7 8h2v2H7zM10.500 8h2v2h-2zM3.500 11.500h2v2h-2zM7 11.500h2v2H7zM10.500 11.500h2v2h-2zM3.500 15h2v2h-2zM7 15h2v2H7zM10.500 15h2v2h-2z" fill="#9c9c9c"/><rect x="3" y="2.500" width="10" height="3.500" fill="#b0b0b0"/></svg><span class="x" id="t_g2" style="left:72px;top:10px;font-size:12px">Fechar Caixa</span></div>
<div class="btn d" style="left:1601px;top:3px;width:315px;height:66px"><svg style="left:79px;top:16px" width="32" height="32" viewBox="0 0 32 32"><circle cx="16" cy="16" r="15.500" fill="#a9a9a9"/><circle cx="16" cy="15" r="12.500" fill="#b3b3b3"/><path d="M15.500 26.500a12 12 0 0 0 12-9" fill="none" stroke="#9c9c9c" stroke-width="2"/><path d="M8.500 16l5.500 5.500L24.500 10" fill="none" stroke="#a0a0a0" stroke-width="4.500" transform="translate(.8 1)"/><path d="M8.500 16l5.500 5.500L24.500 10" fill="none" stroke="#c9c9c9" stroke-width="4"/></svg><span class="x b" id="t_h" style="left:115px;top:25px;font-size:14.5px">( PgDn ) Finalizar</span></div>
<div class="a" style="left:1530px;top:0;width:68px;height:70px;overflow:hidden;color:rgba(100,100,100,.34)"><div class="t" id="wm1" style="left:10px;top:2px;font-size:19.800px">Ativar o Windows</div><div class="t" id="wm2" style="left:10px;top:28px;font-size:14.600px;color:rgba(100,100,100,.24)">Acesse Configurações para ativar o Windows.</div></div><div class="a" style="left:1598px;top:0;width:320px;height:70px;overflow:hidden;color:rgba(100,100,100,.17)"><div class="t" style="left:-58px;top:2px;font-size:19.800px">Ativar o Windows</div><div class="t" style="left:-58px;top:28px;font-size:14.600px">Acesse Configurações para ativar o Windows.</div></div></div>

<!-- ===== status bar ===== -->
<div class="a" id="status" style="left:3px;top:1025px;width:1914px;height:23px;background:#808080;box-shadow:inset 1px 1px 0 #787878">
<div class="t b w" id="f1a" style="left:37px;top:5px;font-size:11px">F1 Ajuda</div>
<div class="t b" id="pag" style="left:0;width:1914px;text-align:center;top:4px;font-size:17.33px;color:#ffff00;letter-spacing:0.480px;text-indent:1.500px">PAGAMENTO EXCLUÍDO</div>
<div class="t b w" id="f1b" style="left:1831px;top:5px;font-size:11px">F1 Ajuda</div>
</div>

</body>
</html>
